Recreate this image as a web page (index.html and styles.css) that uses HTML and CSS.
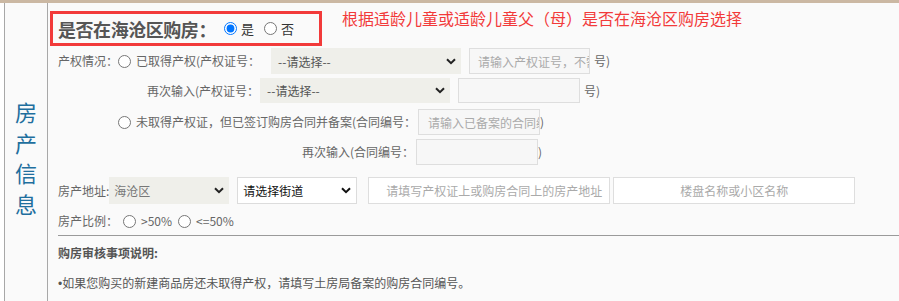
FILE: index.html
```html
<!DOCTYPE html>
<html lang="zh-CN">
<head>
<meta charset="utf-8">
<title>房产信息</title>
<link rel="stylesheet" href="styles.css">
</head>
<body>
<div class="strip"></div>
<div class="frame">
  <div class="side">
    <span>房</span><span>产</span><span>信</span><span>息</span>
  </div>
  <div class="main">
    <div class="head">
      <div class="redbox">
        <span class="q">是否在海沧区购房：</span>
        <input type="radio" name="buy" class="rd r-yes" checked><span class="opt">是</span>
        <input type="radio" name="buy" class="rd r-no"><span class="opt">否</span>
      </div>
      <div class="note">根据适龄儿童或适龄儿童父（母）是否在海沧区购房选择</div>
    </div>

    <div class="row row1">
      <span class="lbl">产权情况：</span>
      <input type="radio" name="own" class="rd r-own">
      <span class="lbl">已取得产权(产权证号：</span>
      <div class="sel sel-a"><span>--请选择--</span><svg class="chev" width="10" height="7" viewBox="0 0 10 7"><path d="M1 1.2 L5 5.2 L9 1.2" fill="none" stroke="#222" stroke-width="2"/></svg></div>
      <div class="field f-a"><span class="ph">请输入产权证号，不需</span></div>
      <span class="lbl tail">号)</span>
    </div>

    <div class="row row2">
      <span class="lbl">再次输入(产权证号：</span>
      <div class="sel sel-b"><span>--请选择--</span><svg class="chev" width="10" height="7" viewBox="0 0 10 7"><path d="M1 1.2 L5 5.2 L9 1.2" fill="none" stroke="#222" stroke-width="2"/></svg></div>
      <div class="field f-b"></div>
      <span class="lbl tail">号)</span>
    </div>

    <div class="row row3">
      <input type="radio" name="own" class="rd r-own">
      <span class="lbl">未取得产权证，但已签订购房合同并备案(合同编号：</span>
      <div class="field f-c f-c3"><span class="ph">请输入已备案的合同编</span></div>
      <span class="lbl">)</span>
    </div>

    <div class="row row4">
      <span class="lbl">再次输入(合同编号：</span>
      <div class="field f-c f-c4"></div>
      <span class="lbl">)</span>
    </div>

    <div class="row row5">
      <span class="lbl">房产地址:</span>
      <div class="sel sel-c"><span>海沧区</span><svg class="chev" width="10" height="7" viewBox="0 0 10 7"><path d="M1 1.2 L5 5.2 L9 1.2" fill="none" stroke="#222" stroke-width="2"/></svg></div>
      <div class="sel sel-d"><span>请选择街道</span><svg class="chev" width="10" height="7" viewBox="0 0 10 7"><path d="M1 1.2 L5 5.2 L9 1.2" fill="none" stroke="#111" stroke-width="2"/></svg></div>
      <div class="field f-d"><span class="ph">请填写产权证上或购房合同上的房产地址</span></div>
      <div class="field f-e"><span class="ph">楼盘名称或小区名称</span></div>
    </div>

    <div class="row row6">
      <span class="lbl">房产比例：</span>
      <input type="radio" name="ratio" class="rd r-ratio1"><span class="lbl">&gt;50%</span>
      <input type="radio" name="ratio" class="rd r-ratio2"><span class="lbl">&lt;=50%</span>
    </div>

    <div class="rule"></div>
    <div class="sub">购房审核事项说明:</div>
    <div class="bullet"><span class="dot">•</span>如果您购买的新建商品房还未取得产权，请填写土房局备案的购房合同编号。</div>

    <div class="mark">斑马号</div>
  </div>
</div>
</body>
</html>
```

FILE: styles.css
```css
html, body {
  margin: 0;
  padding: 0;
  background: #ffffff;
  font-family: "Noto Sans CJK SC", "Noto Sans", sans-serif;
  overflow: hidden;
}

.strip {
  height: 3px;
  background: #cbb8a3;
}

.frame {
  margin-left: 4px;
  height: 298px;
  display: flex;
  border-left: 1px solid #a8a8a8;
  background: #fafafa;
}

.side {
  width: 43px;
  flex: none;
  border-right: 1px solid #a8a8a8;
  display: flex;
  flex-direction: column;
  align-items: center;
  justify-content: center;
  padding-top: 10px;
  box-sizing: border-box;
  color: #1f6f9e;
  font-size: 22px;
  line-height: 30.5px;
}

.main {
  flex: 1;
  position: relative;
  padding-left: 2px;
  font-size: 12px;
  color: #666;
}

.head {
  display: flex;
  align-items: flex-start;
  gap: 20px;
  margin-top: 8px;
}

.redbox {
  box-sizing: border-box;
  width: 272px;
  height: 35px;
  border: 3px solid #f23a3a;
  display: flex;
  align-items: center;
  padding-left: 5px;
}

.q {
  font-size: 18px;
  letter-spacing: -0.45px;
  font-weight: bold;
  color: #555;
  line-height: 20px;
}

.opt {
  font-size: 13px;
  color: #333;
}

.rd {
  width: 13px;
  height: 13px;
  flex: none;
  margin: 0;
}

.rd.r-yes { margin: 0 4px 0 8px; }
.rd.r-no { margin: 0 4px 0 10px; }
.rd.r-own { margin: 0 5px 0 0; }
.rd.r-ratio1 { margin: 0 5px 0 5px; }
.rd.r-ratio2 { margin: 0 5px 0 6px; }

.note {
  color: #f23a3a;
  font-size: 16px;
  line-height: 16px;
  margin-top: -1px;
}

.row {
  display: flex;
  align-items: center;
  margin-left: 8px;
  white-space: nowrap;
}

.lbl {
  line-height: 16px;
}

.row1 { margin-top: 2px; height: 26px; }
.row2 { margin-top: 4px; height: 25px; padding-left: 89px; }
.row3 { margin-top: 6px; height: 26px; padding-left: 60px; }
.row4 { margin-top: 4px; height: 26px; padding-left: 244px; }
.row5 { margin-top: 12px; height: 27px; }
.row6 { margin-top: 9px; height: 16px; }

.sel {
  box-sizing: border-box;
  height: 100%;
  display: flex;
  align-items: center;
  justify-content: space-between;
  padding: 0 5px 0 7px;
  background: #efefea;
  color: #555;
  flex: none;
}

.chev { flex: none; }

.sel-a { width: 190px; margin-left: 11px; }
.sel-b { width: 190px; margin-left: 1px; }
.sel-c { width: 120px; padding-left: 5px; color: #777; }
.sel-d {
  width: 120px;
  margin-left: 8px;
  background: #ffffff;
  border: 1px solid #dcdcdc;
  color: #111;
  padding-left: 5px;
}

.field {
  box-sizing: border-box;
  height: 100%;
  border: 1px solid #dedede;
  background: #f7f7f7;
  display: flex;
  align-items: center;
  overflow: hidden;
  flex: none;
}

.ph {
  color: #aaa;
  white-space: nowrap;
}

.f-a { width: 121px; margin-left: 8px; padding-left: 8px; }
.f-b { width: 122px; margin-left: 8px; }
.f-c { width: 122px; padding-left: 9px; }
.f-c3 { margin-left: 2px; }
.f-c4 { margin-left: 2px; }
.f-d {
  width: 242px;
  margin-left: 11px;
  background: #ffffff;
  justify-content: center;
  padding-left: 10px;
}
.f-e {
  width: 242px;
  margin-left: 3px;
  background: #ffffff;
  justify-content: center;
}

.tail { margin-left: 4px; }

.rule {
  margin-left: 8px;
  margin-top: 6px;
  height: 1px;
  background: #9a9a9a;
}

.sub {
  margin-left: 8px;
  margin-top: 9px;
  line-height: 16px;
  font-weight: bold;
  color: #555;
}

.bullet {
  margin-left: 8px;
  margin-top: 14px;
  line-height: 16px;
  color: #555;
}

.dot {
  font-family: "Liberation Sans", sans-serif;
}

.mark {
  position: absolute;
  left: 757px;
  top: 256px;
  font-size: 22px;
  font-weight: bold;
  color: rgba(0, 0, 0, 0.018);
}
```
